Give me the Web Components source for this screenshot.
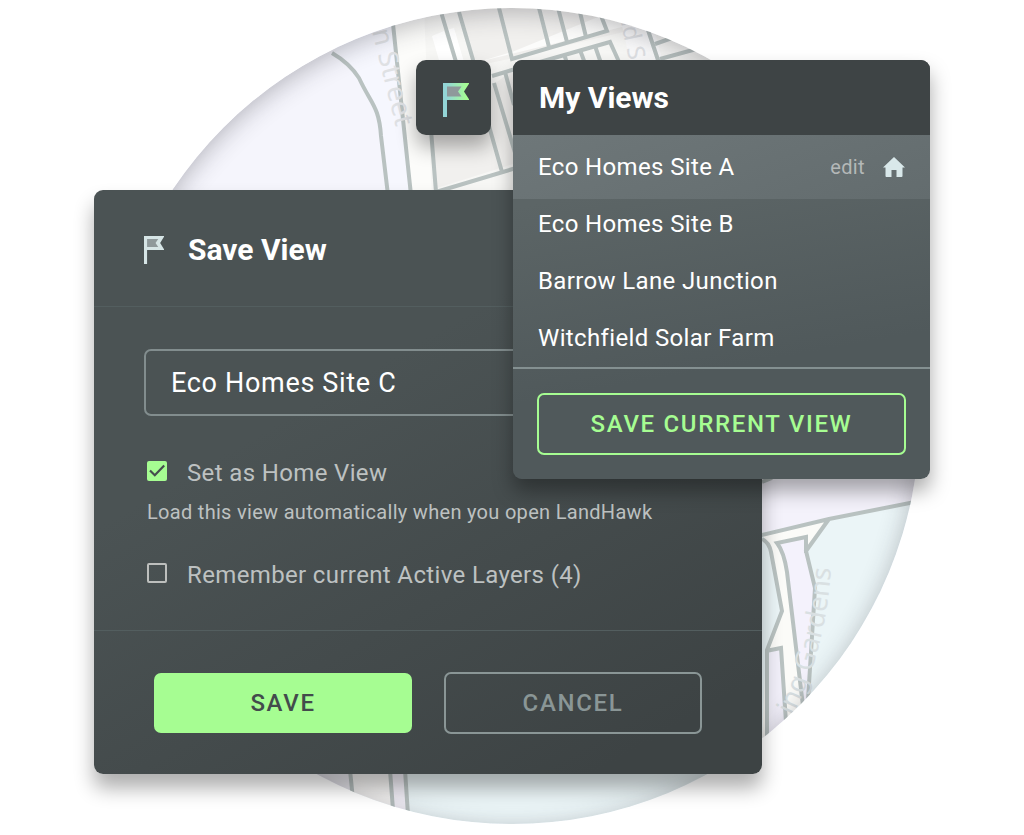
<!DOCTYPE html>
<html lang="en">
<head>
<meta charset="utf-8">
<meta name="viewport" content="width=device-width, initial-scale=1">
<title>Save View</title>
<style>
  body { margin: 0; background: #fff; font-family: Roboto, "Liberation Sans", sans-serif; }
</style>
</head>
<body>
<view-stage>
  <map-disc slot="map"></map-disc>
  <save-card slot="save"></save-card>
  <flag-button slot="toggle"></flag-button>
  <views-panel slot="views"></views-panel>
</view-stage>

<template id="view-stage">
  <style>
    :host { display: grid; position: relative; overflow: hidden; justify-content: center; padding: 60px 20px;
      grid-template-columns: minmax(0, 322px) 75px 22px 249px 168px; grid-template-rows: 130px auto; }
    ::slotted([slot="map"]) { position: absolute; top: 8px; left: 50%; width: 816px; transform: translateX(-50%); }
    ::slotted([slot="save"]) { grid-column: 1 / 5; grid-row: 2; position: relative; }
    ::slotted([slot="toggle"]) { grid-column: 2; grid-row: 1; position: relative; }
    ::slotted([slot="views"]) { grid-column: 4 / 6; grid-row: 1 / 3; align-self: start; position: relative; }
  </style>
  <slot name="map"></slot><slot name="save"></slot><slot name="toggle"></slot><slot name="views"></slot>
</template>

<template id="map-disc">
  <style>
    :host { display: block; aspect-ratio: 1; border-radius: 50%; overflow: hidden; }
    .shade { position: absolute; inset: 0; border-radius: 50%; box-shadow: inset 0 5px 24px rgba(40, 40, 50, .3); }
    svg { display: block; width: 100%; height: 100%; }
    text { font-family: "Noto Sans", sans-serif; fill: #dfe1e4; }
    .lane { fill: #d9e0e2; }
  </style>
  <svg viewBox="104 8 816 816" aria-hidden="true">
    <rect x="104" y="8" width="816" height="816" fill="#f5f5fc"/>
    <path d="M336 58C348 66 354 72 360 80C374 106 378 108 381 132L388 200H800V8H336Z" fill="#f6f7fe"/>
    <path d="M393 8L411 200H800V8Z" fill="#fcfcfa"/>
    <path d="M424 8L432 200H760V8Z" fill="#f7f7f5"/>
    <path d="M432 36l12-5 22 70-14 4zM446 30l8-2 20 68-9 3z" fill="#fff"/>
    <path d="M460 8L476 66L513 58L632 30V8ZM432 130L437 188L513 164V70Z" fill="#f1f0ee"/>
    <path d="M478 62L700 8H620L512 52Z" fill="#fcfcfb"/>
    <path d="M618 8L632 70H665L648 8Z" fill="#fafafb"/>
    <g fill="none" stroke="#b9c2c1" stroke-width="4">
      <path d="M332 53C344 60 352 67 359 78C371 104 379 106 381 136L388 195"/>
      <path d="M393 24L402 110L411 195M441 12L466 95M459 12L476 70M498 4L512 59L607 31L598 8"/>
      <path d="M538 4L549 47M557 4L567 42M578 4L586 37M492 76L512 70L610 42L620 64"/>
      <path d="M564 54L568 66M580 50L586 66M595 46L602 66M505 72L514 105M489 126L502 172M494 83L516 156M431 130L436 192L516 168"/>
      <path d="M648 30L660 66M655 44L672 38M660 59L700 48"/>
    </g>
    <text font-size="27" transform="translate(372 31) rotate(76)">n Street</text>
    <text font-size="24" transform="translate(619 13) rotate(78)">nd S</text>

    <path d="M750 480H920V503L750 537Z" fill="#f4f2fb"/>
    <path d="M750 535L920 501V824H350V760H750Z" fill="#ebf5f7"/>
    <path d="M762 535L829 519L806 551L815 588L808 700L790 740H762L766 652L782 610L770 546Z" fill="#fbfbf8"/>
    <path d="M777 544L806 537L805 552L815 588L808 705H802L788 570Q784 552 777 544Z" fill="#f4f2fc"/>
    <path d="M767 651L781 649L786 740H767Z" fill="#f1eff9"/>
    <path d="M300 760H350V824H300Z" fill="#efeef4"/>
    <path d="M352 760H392V824H352Z" fill="#f7f6f5"/>
    <path d="M392 760H406V824H392Z" fill="#f3f0f8"/>
    <g fill="none" stroke="#b9c2c1" stroke-width="4">
      <path d="M762 482L772 478M758 536L829 519L920 501M829 519L806 551L815 588L808 700"/>
      <path d="M762 539Q769 542 771 552L782 611L767 650V740M806 553V537L777 543Q784 552 787 572L803 706M766 651L781 648L786 722"/>
      <path d="M350 770L353 800M390 770L393 810M405 770L408 815"/>
    </g>
    <path id="lane" d="M770 754Q824 676 831 568" fill="none"/>
    <text class="lane" font-size="27" text-anchor="end"><textPath href="#lane" startOffset="100%">ing Gardens</textPath></text>
  </svg>
  <div class="shade"></div>
</template>

<template id="flag-icon">
  <style>
    :host { display: block; width: 20px; height: 28px; }
    svg { display: block; width: 100%; height: 100%; }
  </style>
  <svg viewBox="0 0 26 34" preserveAspectRatio="none" aria-hidden="true">
    <defs><linearGradient id="tint" x1="0" x2="1" y1="0" y2="0">
      <stop offset=".15" style="stop-color: var(--flag-start, #d6e5e6)"/>
      <stop offset=".9" style="stop-color: var(--flag-end, #d6e5e6)"/>
    </linearGradient></defs>
    <path fill="#8f999b" d="M3 3H20L16 8.500L20 14H3Z"/>
    <path fill="url(#tint)" fill-rule="evenodd" d="M0 0H26.500L21 8.500L26.500 17H4V34H0ZM4 3.500V13.500H18.500L15 8.500L18.500 3.500Z"/>
  </svg>
</template>

<template id="flag-button">
  <style>
    :host { display: block; }
    button { display: grid; place-items: center; width: 75px; height: 75px; padding: 4px 0 0 4px; border: 0; border-radius: 10px;
      background: #3e4445; box-shadow: 0 12px 20px rgba(0, 0, 0, .32); cursor: pointer; }
    flag-icon { width: 26px; height: 34px; --flag-start: #93d5d6; --flag-end: #a6fd92; }
  </style>
  <button type="button" aria-label="Views"><flag-icon></flag-icon></button>
</template>

<template id="check-row">
  <style>
    :host { display: block; }
    label { display: flex; gap: 20px; align-items: flex-start; color: #bdc1c1; font-size: 24px; line-height: 28px; letter-spacing: .015em; cursor: pointer; }
    input { appearance: none; flex: none; box-sizing: border-box; width: 20px; height: 20px; margin: 2px 0 0; border: 2px solid #bdbfbd; border-radius: 2px; }
    input:checked { border: 0; background: #a6fd92; }
    .box { position: relative; display: flex; }
    svg { position: absolute; left: 0; top: 2px; width: 20px; height: 20px; display: none; pointer-events: none; }
    input:checked + svg { display: block; }
  </style>
  <label><span class="box"><input type="checkbox"><svg viewBox="0 0 20 20" fill="none" stroke="#454d4e" stroke-width="2.200" aria-hidden="true"><path d="M3 9.500L7.800 14.200L17.200 4.600"/></svg></span><slot></slot></label>
</template>

<template id="action-button">
  <style>
    :host { display: block; }
    button { display: block; box-sizing: border-box; width: 100%; height: 62px; padding: 0; border: 2px solid currentColor; border-radius: 7px;
      background: none; color: #8a9696; font: 500 24px/28px Roboto, "Liberation Sans", sans-serif; letter-spacing: .07em; cursor: pointer; }
    :host([kind="primary"]) button { height: 60px; border: 0; background: #a6fd92; color: #434b4c; }
    :host([kind="accent"]) button { color: #a6fd92; }
  </style>
  <button type="button"><slot></slot></button>
</template>

<template id="save-card">
  <style>
    :host { display: block; border-radius: 9px; background: linear-gradient(150deg, #4b5354 35%, #3d4344 90%);
      box-shadow: 0 14px 20px rgba(0, 0, 0, .32); }
    header { display: flex; align-items: center; gap: 24px; height: 112px; padding: 4px 50px 0; border-bottom: 1px solid #535e5f; }
    h2 { margin: 0; color: #fff; font-size: 30px; line-height: 36px; font-weight: 700; }
    form { margin: 0; }
    .body { padding: 42px 60px 41px 50px; }
    .name { display: block; box-sizing: border-box; width: 100%; height: 67px; padding: 0 25px; border: 2px solid #828d8e; border-radius: 7px;
      background: none; color: #fff; font: 400 27px/32px Roboto, "Liberation Sans", sans-serif; letter-spacing: .025em; outline: none; }
    .checks { padding: 43px 0 0 3px; }
    p { margin: 13px 0 37px; color: #bdc1c1; font-size: 20px; line-height: 24px; letter-spacing: .015em; }
    footer { display: grid; grid-template-columns: 1fr 1fr; gap: 32px; align-items: center; padding: 41px 60px 40px; border-top: 1px solid #535e5f; }
  </style>
  <form>
    <header><flag-icon></flag-icon><h2>Save View</h2></header>
    <div class="body">
      <input class="name" type="text" aria-label="View name" value="Eco Homes Site C">
      <div class="checks">
        <check-row checked>Set as Home View</check-row>
        <p>Load this view automatically when you open LandHawk</p>
        <check-row>Remember current Active Layers (4)</check-row>
      </div>
    </div>
    <footer><action-button kind="primary">SAVE</action-button><action-button>CANCEL</action-button></footer>
  </form>
</template>

<template id="view-item">
  <style>
    :host { display: flex; align-items: center; height: 57px; padding: 0 25px; color: #fff; font-size: 24px; line-height: 28px; letter-spacing: .015em; }
    :host([current]) { height: 64px; background: linear-gradient(160deg, #6e7779, #636c6e); margin-bottom: -4px; }
    a { color: inherit; text-decoration: none; }
    .tools { display: none; margin-left: auto; align-items: center; gap: 18px; }
    :host([current]) .tools { display: flex; }
    .edit { color: #b4b8b8; font-size: 20px; line-height: 24px; }
    svg { display: block; width: 22px; height: 20px; }
  </style>
  <a href="#"><slot></slot></a>
  <span class="tools"><a class="edit" href="#">edit</a>
    <svg viewBox="0 0 22 20" fill="#d9e8ea" role="img" aria-label="Home view"><path d="M11 0L22 10.500H19.500V19Q19.500 20 18.500 20H13.500V13H8.500V20H3.500Q2.500 20 2.500 19V10.500H0Z"/></svg></span>
</template>

<template id="views-panel">
  <style>
    :host { display: block; border-radius: 9px; overflow: hidden; background: linear-gradient(170deg, #5c6566 30%, #50595b 70%);
      box-shadow: 0 12px 20px rgba(0, 0, 0, .34); }
    h2 { margin: 0; padding: 20px 26px 19px; background: #3e4445; color: #fff; font-size: 30px; line-height: 36px; font-weight: 700; }
    nav { padding-bottom: 1px; border-bottom: 2px solid #849091; }
    footer { padding: 24px; }
  </style>
  <h2>My Views</h2>
  <nav aria-label="My Views">
    <view-item current>Eco Homes Site A</view-item>
    <view-item>Eco Homes Site B</view-item>
    <view-item>Barrow Lane Junction</view-item>
    <view-item>Witchfield Solar Farm</view-item>
  </nav>
  <footer><action-button kind="accent">SAVE CURRENT VIEW</action-button></footer>
</template>

<script>
  class TemplateElement extends HTMLElement {
    constructor() {
      super();
      const template = document.getElementById(this.localName);
      this.attachShadow({ mode: "open" }).append(template.content.cloneNode(true));
    }
  }
  class CheckRow extends TemplateElement {
    connectedCallback() {
      this.shadowRoot.querySelector("input").checked = this.hasAttribute("checked");
    }
  }
  customElements.define("check-row", CheckRow);
  for (const name of ["flag-icon", "action-button", "view-item", "map-disc", "flag-button", "save-card", "views-panel", "view-stage"]) {
    customElements.define(name, class extends TemplateElement {});
  }
</script>
</body>
</html>
